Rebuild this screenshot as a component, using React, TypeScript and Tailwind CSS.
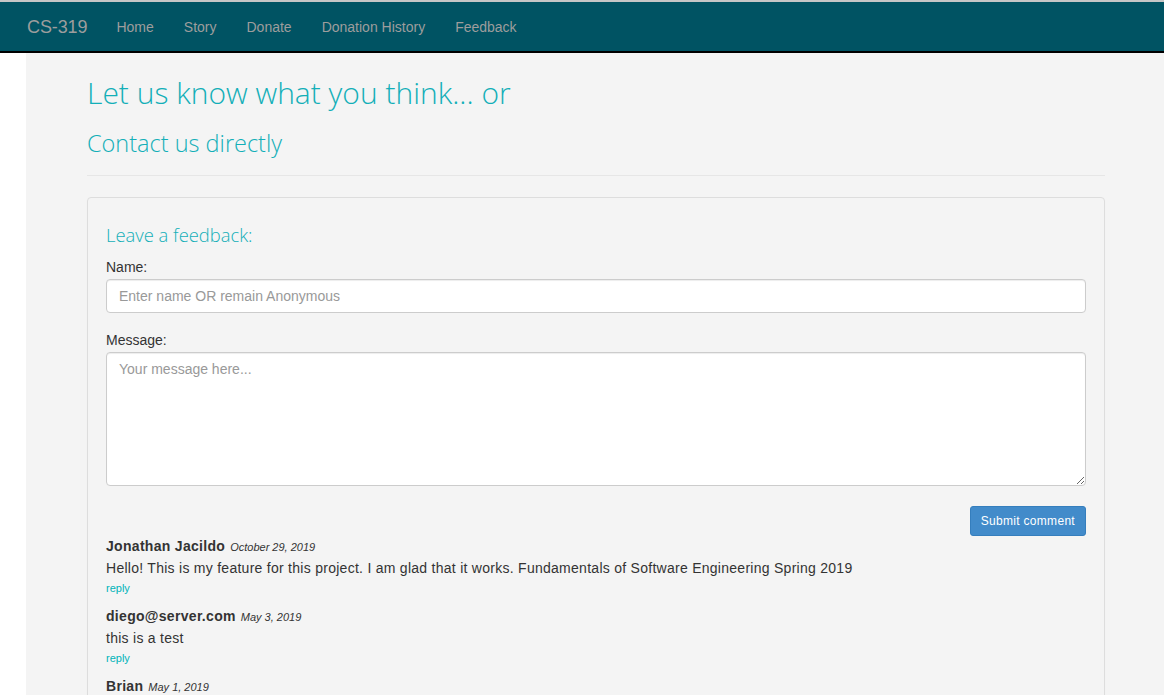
import React from "react";

const sans = { fontFamily: '"Liberation Sans", Arial, sans-serif' };

const comments = [
  {
    author: "Jonathan Jacildo",
    date: "October 29, 2019",
    text: "Hello! This is my feature for this project. I am glad that it works. Fundamentals of Software Engineering Spring 2019",
  },
  { author: "diego@server.com", date: "May 3, 2019", text: "this is a test" },
  { author: "Brian", date: "May 1, 2019", text: "Testing the comment system" },
];

export default function App() {
  return (
    <div className="min-h-[695px] bg-white font-['Liberation_Sans',Arial,sans-serif] text-[#333]">
      {/* Navbar */}
      <nav className="h-[53px] border-t-2 border-t-[#c6c6c6] border-b-2 border-b-black bg-[#005363] flex items-center pl-[27px]">
        <span className="text-[18px] leading-[20px] text-[#9d9d9d] mr-[29px] tracking-[-0.1px]">CS-319</span>
        <ul className="flex items-center gap-[30px] text-[14px] leading-[20px] text-[#9d9d9d]">
          <li>Home</li>
          <li>Story</li>
          <li>Donate</li>
          <li>Donation History</li>
          <li>Feedback</li>
        </ul>
      </nav>

      {/* Content */}
      <div className="ml-[26px] bg-[#f4f4f4] min-h-[642px] pl-[61px] pr-[59px] pt-[23px]">
        <h1 className="font-['Open_Sans',sans-serif] font-light text-[30px] leading-[33px] text-[#13afb8]">
          Let us know what you think... or
        </h1>
        <h2 className="mt-[21px] font-['Open_Sans',sans-serif] font-light text-[23.5px] leading-[26px] text-[#13afb8]">
          Contact us directly
        </h2>
        <hr className="mt-[19px] border-0 border-t border-t-[#e6e6e6]" />

        <div className="mt-[21px] rounded-[4px] border border-[#dddddd] shadow-[0_1px_1px_rgba(0,0,0,0.05)] px-[18px] pt-[27px] pb-[20px]">
          <h4 className="font-['Open_Sans',sans-serif] font-light text-[18.4px] leading-[20px] text-[#13afb8]">
            Leave a feedback:
          </h4>

          <label className="block mt-[12px] mb-[2px] text-[14px] leading-[20px]" style={sans}>
            Name:
          </label>
          <input
            className="block w-full h-[34px] rounded-[4px] border border-[#cccccc] bg-white px-[12px] text-[14px] text-[#555] placeholder:text-[#999] outline-none shadow-[inset_0_1px_1px_rgba(0,0,0,0.075)]"
            placeholder="Enter name OR remain Anonymous"
          />

          <label className="block mt-[17px] mb-[2px] text-[14px] leading-[20px]">Message:</label>
          <textarea
            className="block w-full h-[134px] rounded-[4px] border border-[#cccccc] bg-white px-[12px] py-[6px] text-[14px] leading-[20px] text-[#555] placeholder:text-[#999] outline-none shadow-[inset_0_1px_1px_rgba(0,0,0,0.075)]"
            placeholder="Your message here..."
          />

          <div className="flex justify-end mt-[20px]">
            <button className="h-[30px] rounded-[3px] border border-[#357ebd] bg-[#428bca] px-[10px] text-[12px] leading-[18px] tracking-[0.3px] text-white">
              Submit comment
            </button>
          </div>

          <div className="mt-0">
            {comments.map((c, i) => (
              <div key={i} className={i === 0 ? "" : "mt-[10px]"}>
                <div className="leading-[20px]">
                  <span className="text-[14px] font-bold tracking-[0.3px]">{c.author}</span>
                  <span className="ml-[5px] text-[11px] italic">{c.date}</span>
                </div>
                <p className="mt-px text-[14px] leading-[20px] tracking-[0.27px]">{c.text}</p>
                <a className="block mt-[2px] text-[11px] leading-[16px] text-[#00b3b8]">reply</a>
              </div>
            ))}
          </div>
        </div>
      </div>
    </div>
  );
}
